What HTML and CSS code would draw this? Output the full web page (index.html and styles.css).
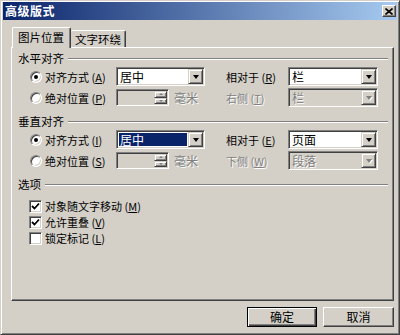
FILE: index.html
```html
<!DOCTYPE html>
<html lang="zh-CN">
<head>
<meta charset="utf-8">
<title>高级版式</title>
<link rel="stylesheet" href="styles.css">
</head>
<body>
<div class="window">
  <div class="titlebar">
    <span class="title">高级版式</span>
    <span class="close"><svg width="8" height="7" viewBox="0 0 8 7"><path d="M0.5 0.5L7.5 6.5M7.5 0.5L0.5 6.5" stroke="#000" stroke-width="1.6"/></svg></span>
  </div>
  <div class="tabs">
    <div class="tab active">图片位置</div>
    <div class="tab">文字环绕</div>
  </div>
  <div class="panel">
    <div class="ghead"><span>水平对齐</span><i class="rule"></i></div>
    <div class="row">
      <span class="radio checked"></span>
      <span class="lbl">对齐方式 (<u>A</u>)</span>
      <div class="cell"><div class="select"><span class="val">居中</span><span class="arrow"></span></div></div>
      <span class="lbl">相对于 (<u>R</u>)</span>
      <div class="select wide"><span class="val">栏</span><span class="arrow"></span></div>
    </div>
    <div class="row">
      <span class="radio"></span>
      <span class="lbl">绝对位置 (<u>P</u>)</span>
      <div class="cell"><div class="spin"><span class="spinbtns"><span class="sb up"></span><span class="sb down"></span></span></div><span class="dis unit">毫米</span></div>
      <span class="lbl dis">右侧 (<u>T</u>)</span>
      <div class="select wide disabled"><span class="val">栏</span><span class="arrow"></span></div>
    </div>

    <div class="ghead gap"><span>垂直对齐</span><i class="rule"></i></div>
    <div class="row">
      <span class="radio checked"></span>
      <span class="lbl">对齐方式 (<u>I</u>)</span>
      <div class="cell"><div class="select"><span class="val"><span class="hl">居中</span></span><span class="arrow"></span></div></div>
      <span class="lbl">相对于 (<u>E</u>)</span>
      <div class="select wide"><span class="val">页面</span><span class="arrow"></span></div>
    </div>
    <div class="row">
      <span class="radio"></span>
      <span class="lbl">绝对位置 (<u>S</u>)</span>
      <div class="cell"><div class="spin"><span class="spinbtns"><span class="sb up"></span><span class="sb down"></span></span></div><span class="dis unit">毫米</span></div>
      <span class="lbl dis">下侧 (<u>W</u>)</span>
      <div class="select wide disabled"><span class="val">段落</span><span class="arrow"></span></div>
    </div>

    <div class="ghead gap"><span>选项</span><i class="rule"></i></div>
    <div class="crow first"><span class="check on"><svg width="9" height="9" viewBox="0 0 9 9"><path d="M1 4L3.5 6.5L8 1.5" fill="none" stroke="#000" stroke-width="1.8"/></svg></span><span>对象随文字移动 (<u>M</u>)</span></div>
    <div class="crow"><span class="check on"><svg width="9" height="9" viewBox="0 0 9 9"><path d="M1 4L3.5 6.5L8 1.5" fill="none" stroke="#000" stroke-width="1.8"/></svg></span><span>允许重叠 (<u>V</u>)</span></div>
    <div class="crow"><span class="check"></span><span>锁定标记 (<u>L</u>)</span></div>
  </div>
  <div class="buttons">
    <button class="btn default">确定</button>
    <button class="btn">取消</button>
  </div>
</div>
</body>
</html>
```
FILE: styles.css
```css
* { box-sizing: border-box; }
html, body { margin: 0; padding: 0; }
body {
  width: 400px;
  height: 335px;
  overflow: hidden;
  background: #d4d0c8;
  font-family: "Noto Sans CJK SC", "Liberation Sans", sans-serif;
  font-size: 11px;
  color: #000;
}
u { text-decoration: underline; text-underline-offset: 1px; }

.window {
  width: 400px;
  height: 335px;
  background: #d4d0c8;
  border: 1px solid;
  border-color: #d4d0c8 #404040 #404040 #d4d0c8;
  box-shadow: inset 1px 1px #fff, inset -1px -1px #808080;
  padding: 1px 2px 0 2px;
}

.titlebar {
  height: 18px;
  display: flex;
  align-items: center;
  justify-content: space-between;
  background: linear-gradient(to right, #0a246a, #a6caf0);
  padding: 0 1px 0 2px;
}
.title {
  color: #fff;
  font-weight: bold;
  line-height: 18px;
  font-size: 12px;
  letter-spacing: 0.5px;
}
.close {
  width: 14px;
  height: 12px;
  background: #d4d0c8;
  border: 1px solid;
  border-color: #fff #404040 #404040 #fff;
  box-shadow: inset -1px -1px #808080;
  display: flex;
  align-items: center;
  justify-content: center;
}
.close svg { display: block; }

.tabs {
  display: flex;
  align-items: flex-end;
  height: 21px;
  margin: 7px 0 -1px 9px;
  position: relative;
  z-index: 1;
}
.tab {
  height: 17px;
  width: 55px;
  line-height: 16px;
  padding-left: 4px;
  margin-bottom: 1px;
  background: #d4d0c8;
  border-top: 1px solid #fff;
  border-right: 1px solid #404040;
  box-shadow: inset -1px 0 #808080;
  border-radius: 2px 2px 0 0;
  white-space: nowrap;
  font-size: 11.5px;
}
.tab.active {
  height: 21px;
  width: 59px;
  padding: 1px 0 0 5px;
  margin-bottom: 0;
  border-left: 1px solid #fff;
}

.panel {
  margin-left: 8px;
  width: 383px;
  height: 254px;
  border: 1px solid;
  border-color: #fff #404040 #404040 #fff;
  box-shadow: inset -1px -1px #808080;
  padding: 3px 5px 0 6px;
}

.ghead {
  display: flex;
  align-items: center;
  height: 15px;
  line-height: 15px;
  font-size: 11.5px;
}
.ghead.gap { margin-top: 6px; }
.rule {
  flex: 1;
  height: 2px;
  border-top: 1px solid #808080;
  border-bottom: 1px solid #fff;
  margin-left: 4px;
}

.row {
  display: grid;
  grid-template-columns: 15px 71px 110px 62px 90px;
  align-items: center;
  height: 21px;
  margin-left: 12px;
}
.lbl { white-space: nowrap; line-height: 16px; }
.dis { color: #808080; text-shadow: 1px 1px 0 #fff; }
.cell { display: flex; align-items: center; }

.radio {
  width: 12px;
  height: 12px;
  border-radius: 50%;
  background: #fff;
  border: 1px solid;
  border-color: #808080 #fff #fff #808080;
  box-shadow: inset 1px 1px #404040, inset -1px -1px #d4d0c8;
  display: flex;
  align-items: center;
  justify-content: center;
}
.radio.checked::after {
  content: "";
  width: 4px;
  height: 4px;
  border-radius: 50%;
  background: #000;
}

.select {
  width: 89px;
  height: 19px;
  display: flex;
  align-items: stretch;
  background: #fff;
  border: 1px solid;
  border-color: #808080 #fff #fff #808080;
  box-shadow: inset 1px 1px #404040, inset -1px -1px #d4d0c8;
  padding: 1px;
  font-size: 12px;
}
.select.wide { width: 90px; }
.select.disabled { background: #d4d0c8; }
.val {
  flex: 1;
  display: flex;
  align-items: center;
  padding: 0 1px 0 2px;
  line-height: 15px;
  white-space: nowrap;
}
.disabled .val { color: #808080; text-shadow: 1px 1px 0 #fff; }
.hl {
  display: block;
  flex: 1;
  align-self: stretch;
  background: #0a246a;
  color: #fff;
  line-height: 13px;
  margin: 1px 0 1px -1px;
  padding-left: 1px;
}
.arrow {
  width: 15px;
  background: #d4d0c8;
  border: 1px solid;
  border-color: #d4d0c8 #404040 #404040 #d4d0c8;
  box-shadow: inset 1px 1px #fff, inset -1px -1px #808080;
  display: flex;
  align-items: center;
  justify-content: center;
}
.arrow::after {
  content: "";
  width: 0;
  height: 0;
  border-left: 3.5px solid transparent;
  border-right: 3.5px solid transparent;
  border-top: 4px solid #000;
}
.disabled .arrow::after {
  border-top-color: #808080;
  filter: drop-shadow(1px 1px 0 #fff);
}

.spin {
  width: 53px;
  height: 17px;
  display: flex;
  justify-content: flex-end;
  background: #d4d0c8;
  border: 1px solid;
  border-color: #808080 #fff #fff #808080;
  box-shadow: inset 1px 1px #404040, inset -1px -1px #d4d0c8;
  padding: 1px;
}
.spinbtns {
  width: 13px;
  display: flex;
  flex-direction: column;
}
.sb {
  flex: 1;
  background: #d4d0c8;
  border: 1px solid;
  border-color: #d4d0c8 #404040 #404040 #d4d0c8;
  box-shadow: inset 1px 1px #fff, inset -1px -1px #808080;
  display: flex;
  align-items: center;
  justify-content: center;
}
.sb::after {
  content: "";
  width: 0;
  height: 0;
  border-left: 2.5px solid transparent;
  border-right: 2.5px solid transparent;
}
.sb.up::after { border-bottom: 2px solid #808080; }
.sb.down::after { border-top: 2px solid #808080; }
.unit { margin-left: 5px; font-size: 12px; }

.crow {
  display: flex;
  align-items: center;
  gap: 3px;
  height: 16px;
  margin-left: 11px;
  line-height: 16px;
  white-space: nowrap;
}
.crow.first { margin-top: 6px; }
.check {
  width: 13px;
  height: 13px;
  background: #fff;
  border: 1px solid;
  border-color: #808080 #fff #fff #808080;
  box-shadow: inset 1px 1px #404040, inset -1px -1px #d4d0c8;
  display: flex;
  align-items: center;
  justify-content: center;
}
.check svg { display: block; }

.buttons {
  display: flex;
  justify-content: flex-end;
  gap: 6px;
  margin-top: 6px;
  padding-right: 3px;
}
.btn {
  width: 71px;
  height: 20px;
  padding: 0;
  font: inherit;
  font-size: 12px;
  color: #000;
  background: #d4d0c8;
  border: 1px solid;
  border-color: #fff #404040 #404040 #fff;
  box-shadow: inset -1px -1px #808080;
  line-height: 16px;
}
.btn.default {
  width: 70px;
  border-color: #000;
  box-shadow: inset 1px 1px #fff, inset -1px -1px #404040, inset -2px -2px #808080;
}
```
